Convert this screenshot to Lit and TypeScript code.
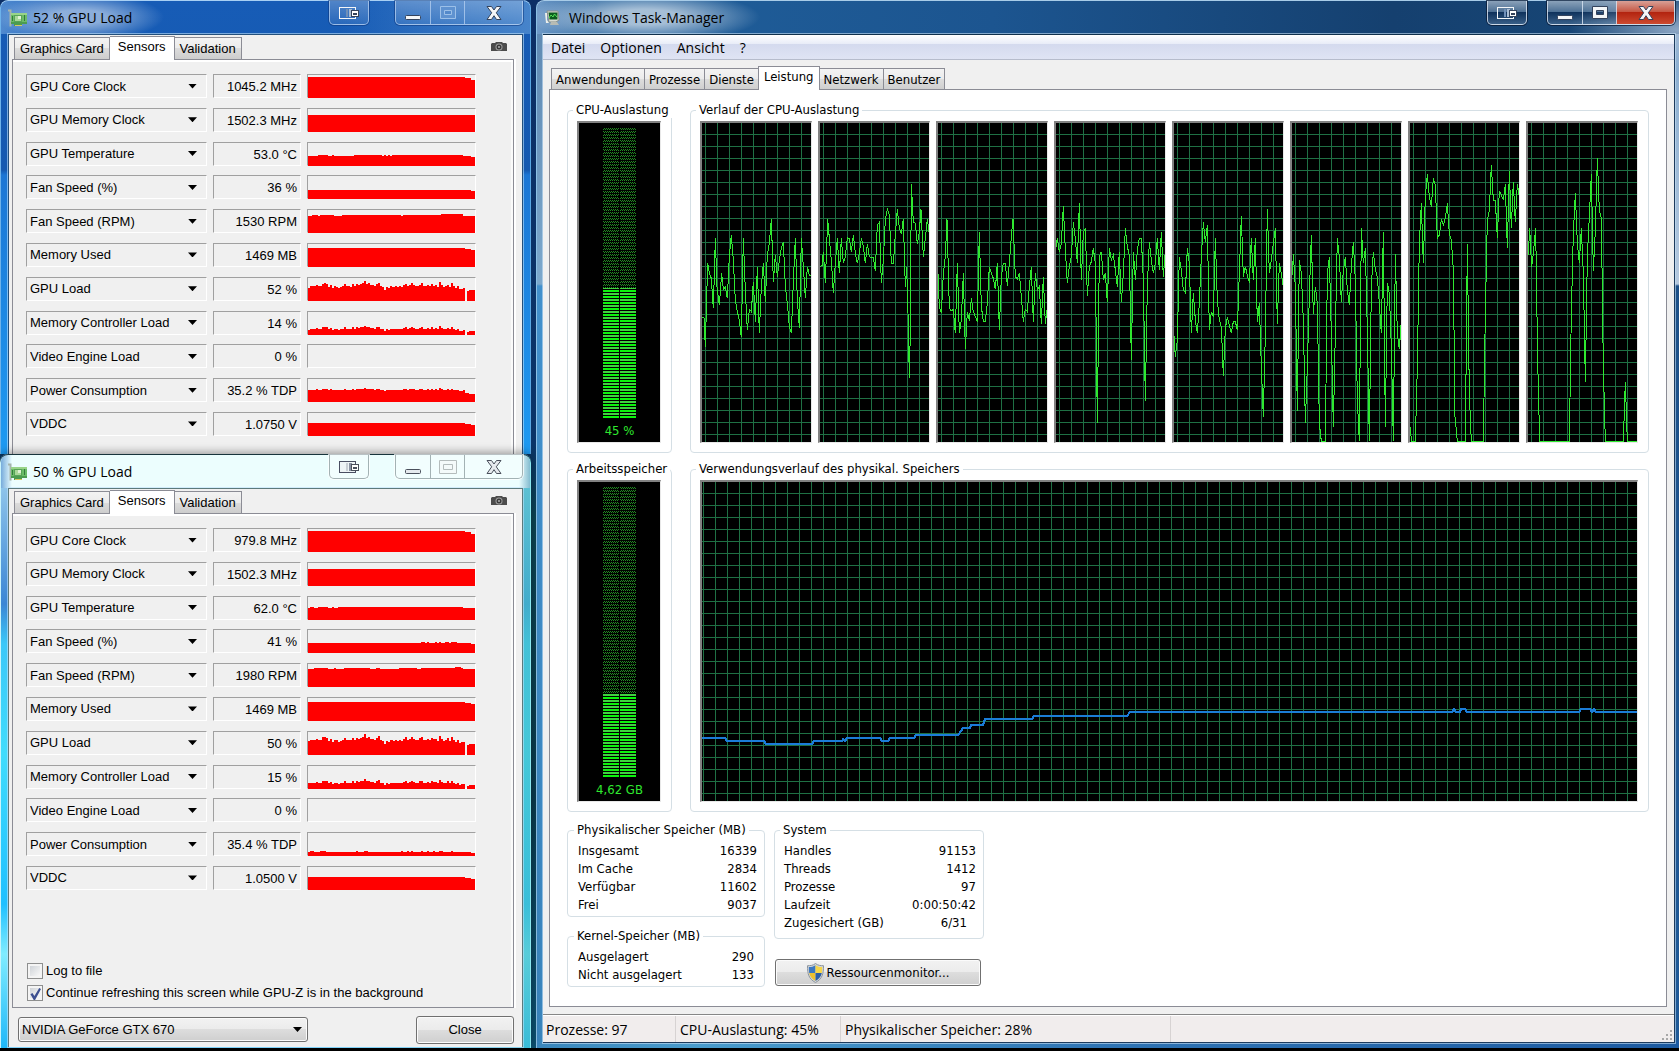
import { LitElement, html, svg, css, nothing } from "lit";
import { customElement, property } from "lit/decorators.js";

/* ---------- data ---------- */

interface Sensor {
  name: string;
  value: string;
  levels: number[];
}

const flat = (level: number, tail: number, bumps: number[] = [], size = 1): number[] =>
  Array.from({ length: 84 }, (_, i) => {
    if (i > 81) return tail;
    if (i > 78) return Math.round((level + tail) / 2);
    return bumps.includes(i) ? level + size : level;
  });

const span = (from: number, to: number) => Array.from({ length: to - from }, (_, i) => from + i);

const loadA = [
  13, 15, 15, 15, 16, 15, 15, 17, 18, 17, 14, 16, 13, 15, 14, 13, 14, 15, 17, 15, 15, 14, 17, 15, 17, 16, 17, 18,
  20, 17, 18, 16, 16, 15, 17, 18, 15, 14, 11, 14, 13, 15, 14, 14, 15, 14, 15, 14, 16, 17, 15, 16, 18, 16, 15, 15,
  16, 18, 15, 15, 16, 15, 17, 15, 16, 14, 19, 16, 14, 15, 16, 14, 18, 15, 13, 15, 12, 12, 13, 0, 10, 11, 11, 11,
];
const loadB = loadA.map((v, i) => (i > 79 ? v : v === 0 ? 0 : v + (i % 7 === 0 ? 1 : 0)));
const memLoad = (load: number[]) => load.map((v) => Math.max(0, Math.round(v * 0.62 - 3)));
const power = (load: number[]) =>
  load.map((v, i) => (i > 80 ? 8 : i > 78 ? 9 : Math.round(v * 0.36 + 7)));

const sensorsA: Sensor[] = [
  { name: "GPU Core Clock", value: "1045.2 MHz", levels: flat(21, 18) },
  { name: "GPU Memory Clock", value: "1502.3 MHz", levels: flat(17, 17) },
  { name: "GPU Temperature", value: "53.0 °C", levels: flat(10, 9, [5, 6, 7, 8, 9, 12, ...span(23, 37), 38, 40, ...span(42, 78)]) },
  { name: "Fan Speed (%)", value: "36 %", levels: flat(9, 8) },
  { name: "Fan Speed (RPM)", value: "1530 RPM", levels: flat(17, 17, [2, 3, 4, ...span(6, 13), ...span(17, 47), ...span(48, 78)]).map((v, i) => (i > 66 && i < 78 ? v + 1 : v)) },
  { name: "Memory Used", value: "1469 MB", levels: flat(19, 17) },
  { name: "GPU Load", value: "52 %", levels: loadA },
  { name: "Memory Controller Load", value: "14 %", levels: memLoad(loadA) },
  { name: "Video Engine Load", value: "0 %", levels: flat(0, 0) },
  { name: "Power Consumption", value: "35.2 % TDP", levels: power(loadA) },
  { name: "VDDC", value: "1.0750 V", levels: flat(13, 11) },
];

const sensorsB: Sensor[] = [
  { name: "GPU Core Clock", value: "979.8 MHz", levels: flat(21, 18) },
  { name: "GPU Memory Clock", value: "1502.3 MHz", levels: flat(17, 17) },
  { name: "GPU Temperature", value: "62.0 °C", levels: flat(12, 12, [1, 2, 5, 6, 7, 8, 9, 12, ...span(15, 27), ...span(27, 78)]) },
  { name: "Fan Speed (%)", value: "41 %", levels: flat(10, 9, [57, 58, 60, 64, 66, 69, 70, 72, 73, 74]) },
  { name: "Fan Speed (RPM)", value: "1980 RPM", levels: flat(18, 18, [3, 4, 5, 6, 7, 8, 9, 13, ...span(18, 31), 34, 35, ...span(46, 55), ...span(57, 78)]).map((v, i) => (i > 73 && i < 77 ? v + 1 : v)) },
  { name: "Memory Used", value: "1469 MB", levels: flat(19, 17) },
  { name: "GPU Load", value: "50 %", levels: loadB },
  { name: "Memory Controller Load", value: "15 %", levels: memLoad(loadB) },
  { name: "Video Engine Load", value: "0 %", levels: flat(0, 0) },
  { name: "Power Consumption", value: "35.4 % TDP", levels: flat(4, 3, [1, 2, 6, 7, 8, 24, 28, 29, 47, 50, 52, 57, 60, 63, 66, 67, 72]) },
  { name: "VDDC", value: "1.0500 V", levels: flat(13, 11) },
];

/* Each core: left edge of its sample space and the samples; 327 x 957 units visible, top at 69. */
const cores: Array<[number, string]> = [
  [426, "426,652 432,652 436,740 443,490 448,520 454,535 460,625 466,415 471,560 478,615 485,520 490,568 496,560 502,595 508,470 514,405 520,480 526,600 532,635 538,660 544,712 550,415 556,570 562,690 568,628 574,635 580,545 586,665 592,500 598,700 604,560 610,490 616,605 622,465 628,430 634,357 640,545 646,465 652,530 658,480 664,445 670,425 676,560 682,610 688,680 694,700 700,545 706,415 712,600 718,683 724,415 730,500 736,595 742,500 748,525 754,525"],
  [780, "780,500 786,497 790,455 796,548 803,357 808,415 814,480 820,578 826,490 832,415 838,520 844,415 850,490 856,470 862,413 868,415 874,455 880,405 886,460 892,490 898,460 904,415 910,440 916,490 922,432 928,470 934,472 940,472 946,512 952,375 958,367 964,548 970,480 976,360 982,328 988,345 994,490 1000,490 1006,405 1012,328 1018,385 1024,403 1030,357 1036,560 1040,500 1044,640 1048,835 1051,690 1054,252 1060,367 1066,370 1072,432 1078,395 1083,328 1090,470 1096,415 1102,357 1107,395"],
  [1134, "1134,520 1138,620 1144,640 1150,520 1156,470 1161,357 1168,625 1174,633 1180,628 1186,700 1192,490 1198,700 1204,660 1210,520 1216,748 1222,635 1228,662 1234,595 1240,635 1246,650 1252,665 1258,397 1264,620 1270,663 1276,665 1282,610 1288,500 1294,520 1300,535 1306,568 1312,490 1318,690 1324,530 1330,490 1336,490 1342,558 1348,490 1354,410 1359,357 1366,530 1372,538 1378,520 1384,590 1390,665 1396,628 1402,635 1408,560 1414,500 1420,665 1426,520 1432,570 1438,560 1444,672 1450,530 1456,672 1461,630"],
  [48, "48,442 52,415 58,455 64,430 70,318 76,450 82,548 88,500 94,470 100,367 106,415 112,490 118,310 124,540 130,397 136,385 142,587 148,500 154,485 160,445 166,490 172,968 178,470 184,455 190,540 196,520 202,607 208,445 214,480 220,465 226,510 232,560 238,455 244,607 250,520 256,385 262,440 268,465 274,780 280,455 286,540 292,450 298,415 304,415 310,540 316,902 322,560 328,425 334,480 340,520 346,490 352,415 358,510 364,397 370,530 375,465"],
  [402, "402,706 406,770 412,720 418,472 424,510 430,570 436,578 442,445 448,490 454,700 460,578 466,660 472,700 478,610 484,470 490,367 496,425 502,375 508,690 514,635 520,650 526,415 532,600 538,660 544,680 550,827 556,685 562,652 568,675 574,700 580,665 586,665 592,690 598,520 604,348 610,530 616,500 622,525 628,548 634,415 640,540 646,415 652,665 658,610 664,800 670,950 676,700 682,328 688,520 694,480 700,430 706,385 712,672 718,490 724,520 729,555"],
  [756, "757,525 760,463 766,560 772,932 778,480 784,520 790,660 796,968 802,800 808,590 814,405 820,643 826,560 832,610 838,970 844,1024 856,1024 862,520 868,472 874,700 880,980 886,700 892,415 898,470 904,607 910,510 916,472 922,570 928,615 934,500 940,425 946,540 952,900 958,1024 964,385 970,490 976,445 982,690 988,1024 994,560 1000,455 1006,510 1012,530 1018,610 1024,700 1030,397 1036,980 1042,548 1048,580 1054,740 1060,1024 1066,463 1072,700 1078,748 1083,675"],
  [90, "90,980 95,1024 106,1024 112,800 118,430 124,310 130,490 136,290 142,222 148,290 154,320 160,235 166,255 172,415 178,405 184,357 190,375 196,355 202,310 208,400 214,420 220,510 225,950 232,1024 256,1024 262,433 268,880 274,1024 310,1024 316,640 322,360 328,330 334,195 340,300 346,302 352,415 358,272 364,285 370,300 376,252 382,445 388,213 394,385 400,245 406,367 412,252 418,290"],
  [444, "445,465 449,385 455,502 461,450 467,385 473,780 479,1024 568,1024 574,640 580,400 586,280 592,430 598,490 604,385 610,520 616,845 622,470 628,350 634,222 640,512 646,390 652,175 658,330 664,355 670,800 676,1024 730,1024 736,845 742,1024 772,1024"],
];

const memoryHistory =
  "702,738 725,738 727,741 764,741 766,744 812,744 814,741 842,741 843,739 845,741 847,738 880,738 882,741 888,741 890,738 914,738 916,735 958,735 961,731 963,728 970,728 971,725 983,725 985,719 1032,719 1034,716 1127,716 1130,712 1452,712 1454,709 1456,712 1460,712 1461,709 1465,709 1467,712 1579,712 1581,709 1590,709 1592,712 1594,709 1596,712 1637,712";

/* ---------- window frame parts ---------- */

const captionStyles = css`
  * {
    box-sizing: border-box;
  }
  button {
    font: inherit;
    color: inherit;
    margin: 0;
    padding: 0;
    border: 0;
    background: none;
  }
  .caption {
    display: flex;
    align-items: flex-start;
    height: 33px;
    flex: none;
  }
  .caption-title {
    display: flex;
    align-items: center;
    gap: 6px;
    flex: 1;
    min-width: 0;
    height: 34px;
    font: 14px/20px "Open Sans", "Noto Sans", sans-serif;
    color: #000;
    white-space: nowrap;
  }
  .caption-buttons {
    display: flex;
    height: 24px;
    border: 1px solid var(--btn-line);
    border-top: 0;
    border-radius: 0 0 5px 5px;
    background: var(--btn-face);
    box-shadow: 0 0 0 1px var(--btn-edge);
    overflow: hidden;
  }
  .caption-buttons button {
    display: grid;
    place-items: center;
    width: 34px;
    height: 23px;
    border-left: 1px solid var(--btn-line);
  }
  .caption-buttons button:first-child {
    border-left: 0;
  }
  .caption-buttons .swap {
    width: 38px;
  }
  .caption-buttons .close {
    width: 58px;
    background: var(--close-face, none);
  }
  .spread {
    margin-right: var(--caption-gap, 26px);
  }
`;

const captionButtons = (dark: boolean, active: boolean) => {
  const edge = dark ? "#34435c" : "#4a505c";
  const fill = dark ? "#f4f6f8" : "#e6eaee";
  const maxFill = active || !dark ? fill : "#8fb4de";
  const maxEdge = dark ? (active ? edge : "#6c98d0") : "#b4bcbc";
  return html`
    <div class="caption-buttons spread">
      <button class="swap" aria-label="Fenster verschieben">
        <svg width="22" height="14" viewBox="0 0 22 14">
          <rect x="1.5" y="1.5" width="16" height="11" fill=${dark ? "none" : "#eef4f6"} stroke=${dark ? "#f4f6f8" : "#4a4e62"} />
          <rect x="8" y="3" width="2" height="8" fill=${dark ? "#6f8fb8" : "#c8ced4"} />
          <rect x="11" y="3" width="3" height="8" fill=${dark ? "#a8bcd4" : "#8a92a2"} />
          <rect x="13.5" y="4.5" width="7" height="6" fill="#fff" stroke=${edge} />
          <rect x="15" y="7" width="4" height="2" fill=${edge} />
        </svg>
      </button>
    </div>
    <div class="caption-buttons">
      <button aria-label="Minimieren">
        <svg width="18" height="16" viewBox="0 0 18 16">
          <rect x="1.5" y="10.5" width="15" height="4" rx="1" fill=${fill} stroke=${edge} />
        </svg>
      </button>
      <button aria-label="Maximieren">
        <svg width="18" height="16" viewBox="0 0 18 16">
          ${dark
            ? svg`<path d="M1.500 1.500h15v12h-15zM5.500 5.500v4h7v-4z" fill-rule="evenodd" fill=${active ? maxFill : "#5f92d0"} stroke=${active ? maxEdge : "#9cc0e8"} />`
            : svg`<path d="M0.500 1.500h17v13h-17zM4.500 5.500h9v5h-9z" fill="#f4fafa" stroke=${maxEdge} />`}
        </svg>
      </button>
      <button class="close" aria-label="Schließen">
        <svg width="18" height="16" viewBox="0 0 18 16">
          <path d="M2 1.500h4.500l2.500 3.500l2.500 -3.500h4.500l-4.700 6.300l4.700 6.700h-4.500l-2.500 -3.800l-2.500 3.800h-4.500l4.700 -6.700z" fill=${fill} stroke=${edge} stroke-linejoin="round" />
        </svg>
      </button>
    </div>
  `;
};

/* ---------- GPU sensor window ---------- */

@customElement("gpu-window")
export class GpuWindow extends LitElement {
  @property() heading = "";
  @property({ attribute: false }) sensors: Sensor[] = [];
  @property({ type: Boolean, reflect: true }) full = false;

  static styles = [
    captionStyles,
    css`
      :host {
        --btn-line: rgba(190, 214, 244, 0.7);
        --btn-edge: rgba(10, 50, 120, 0.5);
        --btn-face: linear-gradient(rgba(255, 255, 255, 0.25), rgba(255, 255, 255, 0.08));
        display: flex;
        flex-direction: column;
        padding: 1px 8px 0 8px;
        border-radius: 8px 8px 0 0;
        background:
          radial-gradient(ellipse 84px 24px at 80px 17px, rgba(255, 255, 255, 0.5) 30%, transparent),
          linear-gradient(90deg, rgba(120, 170, 225, 0.6), transparent 70px 340px, rgba(110, 165, 220, 0.55)) 0 0 / 100% 34px no-repeat,
          linear-gradient(#175cb6, #1559b0 170px, #1c76d4 175px, #1e9af2 100%);
        box-shadow: inset 0 1px 0 #a8d0f4, inset 1px 0 0 #6db2ea, inset -1px 0 0 #58a8e4;
        font: 13px/16px "Liberation Sans", Arial, sans-serif;
        color: #000;
      }
      :host([full]) {
        --btn-line: #a3b2b4;
        --btn-edge: rgba(255, 255, 255, 0.7);
        --btn-face: #f2fefe;
        padding-bottom: 1px;
        background:
          linear-gradient(90deg, #6ca4d8, #ecfefe 12px calc(100% - 12px), #7ab6cc) 0 0 / 100% 34px no-repeat,
          linear-gradient(90deg, transparent 60%, rgba(70, 190, 200, 0.7)) 0 34px / 100% 100% no-repeat,
          linear-gradient(#a6d6f0, #3a86d4 150px, #3cc8f8 190px, #40dcfc 300px, #1fc0ff 450px, #80ecff 500px, #1fb8f8);
        box-shadow: inset 0 1px 0 #17343c, inset 1px 0 0 #c8f4fc, inset -1px 0 0 #8ae8f0, 0 -2px 8px rgba(0, 0, 0, 0.35);
        position: relative;
      }
      .client {
        display: flex;
        flex-direction: column;
        flex: 1;
        padding: 2px 4px 0 3px;
        background: #f0f0f0;
        border: 1px solid #24507c;
        border-bottom: 0;
        box-shadow: 0 0 0 1px rgba(190, 225, 250, 0.6);
      }
      :host([full]) .client {
        border-color: #5c7a7c;
      }
      .strip {
        display: flex;
        align-items: flex-end;
        height: 22px;
        padding-left: 2px;
      }
      .tab {
        height: 22px;
        padding: 0 5px;
        border: 1px solid #8b8c95;
        border-bottom: 0;
        border-left-width: 0;
        background: linear-gradient(#f3f3f3, #ebebeb 50%, #dcdcdc 50%, #cdcdcd);
      }
      .tab:first-child {
        border-left-width: 1px;
      }
      .tab.on {
        height: 24px;
        margin-bottom: -1px;
        padding: 0 8px 4px;
        background: #fff;
        position: relative;
      }
      .camera {
        margin: 0 11px 7px auto;
        line-height: 0;
      }
      .panel {
        display: flex;
        flex-direction: column;
        flex: 1;
        margin-right: 4px;
        padding: 14px 12px 18px 13px;
        border: 1px solid #8b8c95;
        border-bottom: 0;
        box-shadow: 2px 0 0 #fff, inset 0 2px 0 #fff, inset -2px 0 0 #fafafa;
      }
      :host([full]) .panel {
        padding-bottom: 6px;
        border-bottom: 1px solid #8b8c95;
      }
      .sensors {
        display: grid;
        grid-template-rows: repeat(11, 24px);
        align-content: space-between;
        height: 362px;
      }
      .sensor {
        display: grid;
        grid-template-columns: 181px 88px 169px;
        gap: 6px;
      }
      .sunk {
        border: 1px solid;
        border-color: #a0a0a0 #fff #fff #a0a0a0;
        height: 24px;
        min-width: 0;
      }
      .combo {
        display: grid;
        align-items: center;
      }
      .combo > * {
        grid-area: 1 / 1;
      }
      .combo::after,
      .card::after {
        content: "";
        grid-area: 1 / 1;
        justify-self: end;
        margin-right: 9px;
        width: 9px;
        height: 5px;
        background: #000;
        clip-path: polygon(0 0, 100% 0, 50% 100%);
        pointer-events: none;
      }
      select {
        appearance: none;
        border: 0;
        margin: 0;
        padding: 1px 3px 0;
        width: 100%;
        height: 22px;
        background: none;
        font: inherit;
        color: inherit;
        border-radius: 0;
      }
      .card select {
        padding-top: 0;
      }
      .value {
        padding: 4px 3px 0 0;
        text-align: right;
        white-space: nowrap;
      }
      .plot {
        display: block;
        width: 100%;
        height: 23px;
      }
      .options {
        display: grid;
        gap: 6px;
        margin-top: auto;
      }
      .option {
        display: flex;
        align-items: center;
        gap: 3px;
        height: 16px;
        padding-left: 1px;
      }
      input {
        appearance: none;
        display: grid;
        place-items: center;
        width: 16px;
        height: 16px;
        margin: 0;
        border: 1px solid #8e8f8f;
        background: linear-gradient(135deg, #cfd3d8, #f8f8f8) content-box, #f4f4f4;
        padding: 2px;
      }
      input:checked::before {
        content: "";
        width: 11px;
        height: 12px;
        background: #3c4f90;
        clip-path: polygon(4% 52%, 22% 42%, 40% 66%, 84% 0, 100% 8%, 46% 100%, 34% 100%);
      }
      .footer {
        display: flex;
        justify-content: space-between;
        align-items: center;
        height: 39px;
        padding: 4px 4px 0 6px;
      }
      .card {
        display: grid;
        align-items: center;
        width: 290px;
        height: 25px;
        border: 1px solid #707070;
        border-radius: 3px;
        background: linear-gradient(#f2f2f2, #ebebeb 50%, #dddddd 50%, #cfcfcf);
        box-shadow: inset 0 0 0 1px #fbfbfb;
      }
      .card::after {
        margin-right: 5px;
      }
      .card > * {
        grid-area: 1 / 1;
      }
      .push {
        width: 98px;
        height: 28px;
        border: 1px solid #707070;
        border-radius: 3px;
        background: linear-gradient(#f2f2f2, #ebebeb 50%, #dddddd 50%, #cfcfcf);
        box-shadow: inset 0 0 0 1px #fbfbfb;
      }
    `,
  ];

  private plot(levels: number[]) {
    const step = 168 / levels.length;
    const d = levels.map((h, i) => `M${i * step} 23v${-h}h${step}v${h}z`).join("");
    return html`<svg class="plot" viewBox="0 0 168 23" preserveAspectRatio="none" shape-rendering="crispEdges">
      <path d=${d} fill="#ff0000" />
    </svg>`;
  }

  render() {
    return html`
      <div class="caption">
        <div class="caption-title">
          <svg width="19" height="18" viewBox="0 0 19 18">
            <path d="M0 1.500h2.500v16" fill="none" stroke="#a4b4ac" stroke-width="2" />
            <path d="M3 4h16v11H3z" fill="#6cbc68" />
            <path d="M3 4h16v2H3z" fill="#98d488" />
            <path d="M3 13h16v2h-5v2H6v-2H3z" fill="#4c9c50" />
            <rect x="6.500" y="6.500" width="7" height="6" fill="#a8d898" stroke="#58a458" />
            <path d="M10 7h3v3h-3z" fill="#e0f2d4" />
            <path d="M16.500 6v6M4.500 7v5" stroke="#347c3c" />
            <path d="M7 16.500h7" stroke="#d8c860" />
          </svg>
          <span>${this.heading}</span>
        </div>
        ${captionButtons(!this.full, false)}
      </div>
      <div class="client">
        <div class="strip" role="tablist">
          <button class="tab" role="tab">Graphics Card</button>
          <button class="tab on" role="tab" aria-selected="true">Sensors</button>
          <button class="tab" role="tab">Validation</button>
          <button class="camera" aria-label="Screenshot">
            <svg width="16" height="10" viewBox="0 0 16 10">
              <path d="M0 2l1-1h3l1-1h6l1 1h3l1 1v7H0z" fill="#4c4c4c" />
              <circle cx="8" cy="5" r="3.500" fill="#a0a0a0" />
              <circle cx="8" cy="5" r="2.500" fill="#3a3a3a" />
              <circle cx="8" cy="5" r="1" fill="#b0b0b0" />
            </svg>
          </button>
        </div>
        <div class="panel">
          <div class="sensors">
            ${this.sensors.map(
              (s) => html`<div class="sensor">
                <div class="combo sunk">
                  <select aria-label=${s.name}>
                    <option>${s.name}</option>
                  </select>
                </div>
                <div class="value sunk">${s.value}</div>
                <div class="sunk">${this.plot(s.levels)}</div>
              </div>`
            )}
          </div>
          ${this.full
            ? html`<div class="options">
                <label class="option"><input type="checkbox" />Log to file</label>
                <label class="option"
                  ><input type="checkbox" checked />Continue refreshing this screen while GPU-Z is in the background</label
                >
              </div>`
            : nothing}
        </div>
        ${this.full
          ? html`<div class="footer">
              <div class="card">
                <select aria-label="Grafikkarte">
                  <option>NVIDIA GeForce GTX 670</option>
                </select>
              </div>
              <button class="push">Close</button>
            </div>`
          : nothing}
      </div>
    `;
  }
}

/* ---------- task manager ---------- */

@customElement("task-manager")
export class TaskManager extends LitElement {
  static styles = [
    captionStyles,
    css`
      :host {
        --btn-line: rgba(214, 226, 240, 0.85);
        --btn-edge: rgba(10, 26, 52, 0.75);
        --btn-face: linear-gradient(rgba(255, 255, 255, 0.5), rgba(255, 255, 255, 0.22) 50%, rgba(0, 10, 40, 0.3) 50%, rgba(255, 255, 255, 0.15));
        --close-face: linear-gradient(#d8a096, #c4523e 50%, #b32410 50%, #cc4a30);
        --caption-gap: 20px;
        display: flex;
        flex-direction: column;
        padding: 1px 4px 5px 7px;
        border-radius: 8px 0 0 0;
        background:
          radial-gradient(ellipse 116px 26px at 108px 17px, rgba(255, 255, 255, 0.6) 30%, transparent) no-repeat,
          radial-gradient(ellipse 110px 40px at 100% 30px, rgba(170, 190, 215, 0.8), transparent) no-repeat,
          linear-gradient(90deg, rgba(140, 175, 215, 0.75), transparent 60px) 0 0 / 100% 34px no-repeat,
          linear-gradient(90deg, #20609c, #1c5590 40%, #15406f 75%, #184878) 0 0 / 100% 34px no-repeat,
          linear-gradient(90deg, #3a86bc, #4a9ccc 14%, #2f74b4 50%, #1d5aa0) 0 100% / 100% 7px no-repeat,
          linear-gradient(#7ea6cc, #b4c8de 284px, #1c5088 286px, #1f5a98) 100% 0 / 5px 100% no-repeat,
          linear-gradient(#5c86b0, #7ca8cc 284px, #4290cc 286px, #3a84bc);
        box-shadow: inset 0 1px 0 #a8cce8, inset 1px 0 0 #8cc0e4;
        font: 13px/18px "DejaVu Sans Condensed", Tahoma, "Noto Sans", sans-serif;
        color: #000;
      }
      .caption-title {
        gap: 7px;
      }
      .client {
        display: flex;
        flex-direction: column;
        flex: 1;
        min-height: 0;
        background: #f0f0f0;
        border: 1px solid #1c3a5c;
        border-top-color: #10304c;
        border-left: 0;
        box-shadow: 0 0 0 1px rgba(200, 225, 245, 0.6);
      }
      .menu {
        display: flex;
        gap: 15px;
        height: 25px;
        padding: 1px 0 0 8px;
        background: linear-gradient(#fff, #e9edf8 36%, #d4daee 38%, #dfe4f4);
        border-bottom: 1px solid #b6bccc;
        font: 14px/20px "Open Sans", "Noto Sans", sans-serif;
      }
      .strip {
        display: flex;
        align-items: flex-end;
        height: 29px;
        padding-left: 8px;
      }
      .tab {
        height: 21px;
        margin-right: -1px;
        padding: 1px 4px 0;
        border: 1px solid #8b8c95;
        border-bottom: 0;
        background: linear-gradient(#f3f3f3, #ebebeb 50%, #dddddd 50%, #cfcfcf);
      }
      .tab.on {
        height: 24px;
        margin-bottom: -1px;
        padding: 0 5px 3px;
        background: #fff;
        position: relative;
      }
      .panel {
        display: flex;
        flex-direction: column;
        gap: 8px;
        flex: 1;
        min-height: 0;
        margin: 0 7px 7px 6px;
        padding: 12px 17px 19px 17px;
        background: #fff;
        border: 1px solid #8b8c95;
      }
      .row {
        display: grid;
        grid-template-columns: 105px 1fr;
        gap: 18px;
        flex: 1;
        min-height: 0;
      }
      fieldset {
        min-width: 0;
        margin: 0;
        padding: 3px 10px 9px 9px;
        border: 1px solid #d5dfe5;
        border-radius: 4px;
      }
      legend {
        height: 16px;
        margin: 0 -8px 0 -4px;
        padding: 0 3px;
        line-height: 16px;
        white-space: nowrap;
      }
      .history {
        display: flex;
        gap: 6px;
      }
      .screen {
        flex: 1;
        min-width: 0;
        border: 1px solid;
        border-width: 2px 1px 1px 2px;
        border-color: #828282 #e8e8e8 #e8e8e8 #828282;
        background-color: #000;
      }
      .grid {
        background-image:
          linear-gradient(90deg, #1f7044 1px, transparent 1px),
          linear-gradient(#1f7044 1px, transparent 1px);
        background-size: 12px 12px;
        background-position: 3px 0, 0 11px;
      }
      .grid.wide {
        background-position: 1px 0, 0 11px;
      }
      .screen svg {
        display: block;
        width: 100%;
        height: 100%;
      }
      .screen polyline {
        fill: none;
        stroke: #2fe82f;
        vector-effect: non-scaling-stroke;
      }
      .screen .blue {
        stroke: #1b7cd8;
        stroke-width: 2px;
      }
      .gauge {
        display: flex;
      }
      .gauge .screen {
        display: flex;
        flex-direction: column;
        align-items: center;
        padding-top: 5px;
        color: #2fe82f;
      }
      .bar {
        display: flex;
        flex-direction: column;
        justify-content: flex-end;
        flex: 1;
        width: 33px;
        background:
          linear-gradient(90deg, transparent 16px, #000 16px 17px, transparent 17px),
          repeating-linear-gradient(0deg, transparent 0 2px, #000 2px 3px),
          repeating-conic-gradient(#218a21 0 25%, #000 0 50%) 0 0 / 2px 2px;
      }
      .lit {
        background:
          linear-gradient(90deg, transparent 16px, #000 16px 17px, transparent 17px),
          repeating-linear-gradient(0deg, #0cf40c 0 2px, #000 2px 3px, #3ed43e 3px 5px, #000 5px 6px);
      }
      .reading {
        height: 24px;
        line-height: 25px;
      }
      .stats {
        display: flex;
        align-items: flex-start;
        gap: 9px;
        margin-top: 2px;
      }
      .stack {
        display: grid;
        gap: 11px;
        width: 198px;
      }
      .stack.wide {
        gap: 20px;
        width: 210px;
      }
      .facts {
        padding: 4px 7px 2px 10px;
      }
      .facts.inset {
        padding-right: 10px;
      }
      .facts.tall {
        padding-bottom: 6px;
        padding-left: 9px;
      }
      dl {
        margin: 0;
      }
      .fact {
        display: flex;
        justify-content: space-between;
        height: 18px;
      }
      dd {
        margin: 0;
      }
      .short {
        padding-right: 9px;
      }
      .push {
        display: flex;
        align-items: center;
        justify-content: center;
        gap: 3px;
        height: 27px;
        margin: 0 3px 0 1px;
        border: 1px solid #707070;
        border-radius: 3px;
        background: linear-gradient(#f2f2f2, #ebebeb 50%, #dddddd 50%, #cfcfcf);
        box-shadow: inset 0 0 0 1px #fbfbfb;
      }
      .status {
        display: flex;
        align-items: stretch;
        height: 28px;
        border-top: 1px solid #868686;
        box-shadow: inset 0 1px 0 #fff;
        background: #f1eded;
        font: 14px/28px "Open Sans", "Noto Sans", sans-serif;
      }
      .cell {
        padding-left: 4px;
        border-right: 1px solid #d7d3d3;
        margin-top: 1px;
        white-space: nowrap;
      }
      .c1 {
        width: 133px;
        padding-left: 3px;
      }
      .c2 {
        width: 165px;
      }
      .c3 {
        width: 330px;
      }
      .grip {
        margin: auto 1px 1px auto;
        width: 11px;
        height: 11px;
      }
    `,
  ];

  private facts(title: string, rows: string[][], extra = "") {
    return html`<fieldset class="facts ${extra}">
      <legend>${title}</legend>
      <dl>
        ${rows.map(
          ([k, v]) => html`<div class="fact">
            <dt>${k}</dt>
            <dd class=${v.includes("/") ? "short" : ""}>${v}</dd>
          </div>`
        )}
      </dl>
    </fieldset>`;
  }

  private gauge(title: string, percent: number, reading: string) {
    return html`<fieldset class="gauge">
      <legend>${title}</legend>
      <div class="screen">
        <div class="bar"><div class="lit" style="height:${percent}%"></div></div>
        <div class="reading">${reading}</div>
      </div>
    </fieldset>`;
  }

  render() {
    const tabs = ["Anwendungen", "Prozesse", "Dienste", "Leistung", "Netzwerk", "Benutzer"];
    return html`
      <div class="caption">
        <div class="caption-title">
          <svg width="19" height="18" viewBox="0 0 19 18">
            <path d="M4 2h11l1 9l-3 2H6z" fill="#d8dcd4" stroke="#8a9088" />
            <path d="M5.500 3.500h9v7h-8z" fill="#0c5c1c" />
            <path d="M6 9l2-3l2 2l1.500-3l2.500 3" fill="none" stroke="#54e054" />
            <path d="M8 13h6l2 3H7z" fill="#b8bcb4" />
            <path d="M2 4h2v7l2 3H3z" fill="#eef0ea" />
          </svg>
          <span>Windows Task-Manager</span>
        </div>
        ${captionButtons(true, true)}
      </div>
      <div class="client">
        <nav class="menu">
          ${["Datei", "Optionen", "Ansicht", "?"].map((m) => html`<button>${m}</button>`)}
        </nav>
        <div class="strip" role="tablist">
          ${tabs.map(
            (t) => html`<button role="tab" class="tab ${t === "Leistung" ? "on" : ""}" aria-selected=${t === "Leistung"}>${t}</button>`
          )}
        </div>
        <div class="panel">
          <div class="row">
            ${this.gauge("CPU-Auslastung", 45, "45 %")}
            <fieldset class="history">
              <legend>Verlauf der CPU-Auslastung</legend>
              ${cores.map(
                ([x, points]) => html`<div class="screen grid">
                  <svg viewBox="${x} 69 327 957" preserveAspectRatio="none" shape-rendering="crispEdges">
                    ${svg`<polyline points=${points} />`}
                  </svg>
                </div>`
              )}
            </fieldset>
          </div>
          <div class="row">
            ${this.gauge("Arbeitsspeicher", 28.6, "4,62 GB")}
            <fieldset class="history">
              <legend>Verwendungsverlauf des physikal. Speichers</legend>
              <div class="screen grid wide">
                <svg viewBox="702 482 935 319" preserveAspectRatio="none" shape-rendering="crispEdges">
                  ${svg`<polyline class="blue" points=${memoryHistory} />`}
                </svg>
              </div>
            </fieldset>
          </div>
          <div class="stats">
            <div class="stack">
              ${this.facts("Physikalischer Speicher (MB)", [
                ["Insgesamt", "16339"],
                ["Im Cache", "2834"],
                ["Verfügbar", "11602"],
                ["Frei", "9037"],
              ])}
              ${this.facts(
                "Kernel-Speicher (MB)",
                [
                  ["Ausgelagert", "290"],
                  ["Nicht ausgelagert", "133"],
                ],
                "inset"
              )}
            </div>
            <div class="stack wide">
              ${this.facts(
                "System",
                [
                  ["Handles", "91153"],
                  ["Threads", "1412"],
                  ["Prozesse", "97"],
                  ["Laufzeit", "0:00:50:42"],
                  ["Zugesichert (GB)", "6/31"],
                ],
                "tall"
              )}
              <button class="push">
                <svg width="17" height="20" viewBox="0 0 17 20">
                  <path d="M8.500 0.500c2.500 2 5 2.200 8 2.200c0 8-1 13-8 16.800c-7-3.800-8-8.800-8-16.800c3 0 5.500-0.200 8-2.200z" fill="#d4d8dc" stroke="#8c949c" />
                  <path d="M8.500 2.200v7.800H2.200c-0.300-2-0.400-4-0.400-6c2.700 0 4.700-0.400 6.700-1.800z" fill="#3c78c0" />
                  <path d="M8.500 2.200v7.800h6.300c0.300-2 0.400-4 0.400-6c-2.700 0-4.700-0.400-6.700-1.800z" fill="#f6d648" />
                  <path d="M8.500 10v8c-4-2.300-5.700-4.700-6.300-8z" fill="#ecc030" />
                  <path d="M8.500 10v8c4-2.300 5.700-4.700 6.300-8z" fill="#2c5ea8" />
                </svg>
                Ressourcenmonitor...
              </button>
            </div>
          </div>
        </div>
        <footer class="status">
          <div class="cell c1">Prozesse: 97</div>
          <div class="cell c2">CPU-Auslastung: 45%</div>
          <div class="cell c3">Physikalischer Speicher: 28%</div>
          <svg class="grip" viewBox="0 0 11 11" shape-rendering="crispEdges">
            <path d="M8 0h2v2H8zM4 4h2v2H4zM8 4h2v2H8zM0 8h2v2H0zM4 8h2v2H4zM8 8h2v2H8z" fill="#a8a8a8" />
          </svg>
        </footer>
      </div>
    `;
  }
}

/* ---------- desktop ---------- */

@customElement("app-root")
export class AppRoot extends LitElement {
  static styles = css`
    :host {
      display: flex;
      gap: 5px;
      box-sizing: border-box;
      height: 100vh;
      min-height: 900px;
      padding-bottom: 3px;
      overflow: hidden;
      background:
        linear-gradient(#000, #000) 0 100% / 100% 3px no-repeat,
        linear-gradient(#0c2f66, #0a3468 440px, #0c4452 520px, #0a3a4c 800px, #0c5070);
    }
    .left {
      display: flex;
      flex-direction: column;
      flex: none;
      width: 531px;
    }
    .rest {
      flex: 1;
    }
    task-manager {
      flex: 1;
      min-width: 0;
    }
  `;

  render() {
    return html`
      <div class="left">
        <gpu-window heading="52 % GPU Load" .sensors=${sensorsA}></gpu-window>
        <gpu-window class="rest" full heading="50 % GPU Load" .sensors=${sensorsB}></gpu-window>
      </div>
      <task-manager></task-manager>
    `;
  }
}
